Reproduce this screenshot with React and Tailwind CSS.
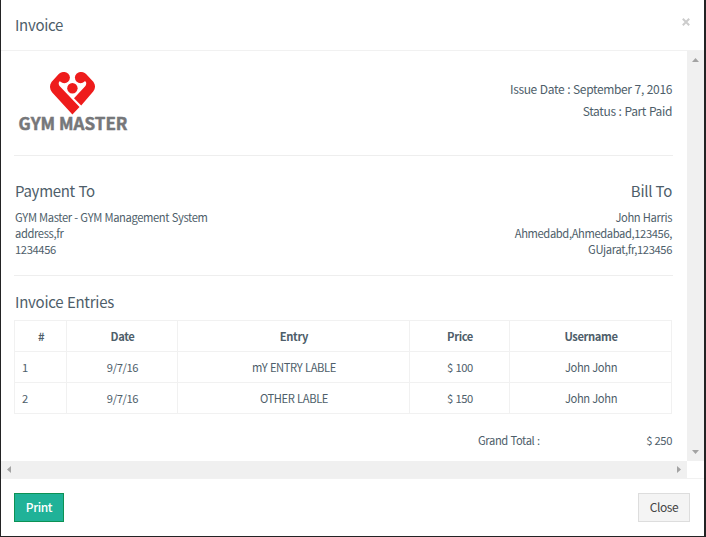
const rows = [
  ["1", "9/7/16", "mY ENTRY LABLE", "$ 100", "John John"],
  ["2", "9/7/16", "OTHER LABLE", "$ 150", "John John"],
];

function Logo() {
  return (
    <svg className="block h-[64px] w-[112px]" viewBox="0 0 112 64">
      <g fill="#ee1c1c">
        <circle cx="46.3" cy="6.600" r="5.600" />
        <circle cx="62.5" cy="6.600" r="5.600" />
        <path d="M46.300 1C43.800 1 42 1.800 40.500 3.300L33.500 11C31.300 14.200 31.500 18 34 21.200L54.400 43.500L61.500 36L41.800 15.300C40 13 40.500 10.300 43 9.500L47.500 10L50 4Z" />
        <path d="M62.500 1C65 1 66.800 1.800 68.300 3.300L75.500 11C77.700 14.200 77.500 17.500 75.200 20.600L63.200 34.500L56 27.300L67.200 15.300C69 13 68.500 10.300 66 9.500L61.500 10L58.500 4Z" />
        <circle cx="54.400" cy="17.200" r="5.200" />
      </g>
      <text x="0.5" y="59" textLength="109" lengthAdjust="spacingAndGlyphs" fill="#76777a" stroke="#76777a" strokeWidth="0.5" className="font-['Noto_Sans_CJK_SC',sans-serif] text-[16.5px] font-bold tracking-normal [word-spacing:0px]">GYM MASTER</text>
    </svg>
  );
}

export default function App() {
  return (
    <div className="h-[537px] w-[706px] overflow-hidden bg-[#232324] pr-0.5 pb-px pl-px font-['Noto_Sans_CJK_SC',sans-serif] text-[11.2px] leading-4 tracking-[-0.38px] text-[#4e5e6a] [word-spacing:0.4px]">
      <div className="flex h-[536px] w-[703px] flex-col bg-white">
        <header className="flex h-[51px] shrink-0 justify-between border-b border-[#f1f1f1] pt-[15px] pr-[14px] pl-[14px]">
          <h4 className="text-[15px] leading-5 tracking-[-0.3px]">Invoice</h4>
          <svg className="mt-[3px] h-[8px] w-[8px]" viewBox="0 0 8 8" stroke="#cccccc" strokeWidth="2"><path d="M.8 .8L7.200 7.200M7.200 .8L.8 7.200" /></svg>
        </header>
        <div className="flex h-[410px] shrink-0">
          <main className="w-[686px] pr-[14px] pl-[13px]">
            <div className="flex h-[105px] justify-between border-b border-[#eeeeee] pt-5 pl-1">
              <Logo />
              <div className="mt-[7px] pr-px text-right text-[12px] leading-[22px] tracking-[-0.36px] [word-spacing:0.6px]">
                <p>Issue Date : September 7, 2016</p>
                <p>Status : Part Paid</p>
              </div>
            </div>
            <div className="flex h-[120px] justify-between border-b border-[#eeeeee] pt-[25px] pl-px">
              <div>
                <h4 className="mb-2 text-[15px] leading-5 tracking-[-0.3px]">Payment To</h4>
                <p>GYM Master - GYM Management System</p>
                <p>address,fr</p>
                <p>1234456</p>
              </div>
              <div className="pr-px text-right">
                <h4 className="mb-2 text-[15px] leading-5 tracking-[-0.3px]">Bill To</h4>
                <p>John Harris</p>
                <p>Ahmedabd,Ahmedabad,123456,</p>
                <p>GUjarat,fr,123456</p>
              </div>
            </div>
            <h4 className="pt-4 pb-2 pl-px text-[15px] leading-5 tracking-[-0.25px]">Invoice Entries</h4>
            <table className="w-[658px] table-fixed border-collapse text-center">
              <colgroup>
                <col className="w-[52px]" />
                <col className="w-[111px]" />
                <col className="w-[232px]" />
                <col className="w-[100px]" />
                <col className="w-[162px]" />
              </colgroup>
              <thead>
                <tr className="h-[31px]">
                  {["#", "Date", "Entry", "Price", "Username"].map((h) => (
                    <th key={h} className="border border-[#f1f1f1] p-0 pl-px font-bold">{h}</th>
                  ))}
                </tr>
              </thead>
              <tbody>
                {rows.map((r) => (
                  <tr key={r[0]} className="h-[31px]">
                    {r.map((c, i) => (
                      <td key={i} className={i === 0 ? "border border-[#f1f1f1] p-0 pl-[7px] text-left" : "border border-[#f1f1f1] p-0 pl-px"}>{c}</td>
                    ))}
                  </tr>
                ))}
              </tbody>
            </table>
            <div className="flex justify-between pt-[18px] pl-[464px]">
              <span>Grand Total :</span>
              <span className="pr-px">$ 250</span>
            </div>
          </main>
          <div className="flex w-[17px] flex-col items-center justify-between bg-[#f0f0f0] pt-[7px] pb-[7px]">
            <svg className="h-1 w-[7px]" viewBox="0 0 7 4" fill="#a3a3a3"><path d="M0 4L3.500 0L7 4Z" /></svg>
            <svg className="h-1 w-[7px]" viewBox="0 0 7 4" fill="#a3a3a3"><path d="M0 0L3.500 4L7 0Z" /></svg>
          </div>
        </div>
        <div className="flex h-[17px] w-[686px] shrink-0 items-center justify-between bg-[#f0f0f0] px-[6px]">
          <svg className="h-[7px] w-1" viewBox="0 0 4 7" fill="#a3a3a3"><path d="M4 0L0 3.500L4 7Z" /></svg>
          <svg className="h-[7px] w-1" viewBox="0 0 4 7" fill="#a3a3a3"><path d="M0 0L4 3.500L0 7Z" /></svg>
        </div>
        <footer className="flex flex-1 items-start justify-between border-t border-[#f1f1f1] pt-[14px] pr-[14px] pl-[13px] text-[12px]">
          <button className="h-[29px] w-[50px] border border-[#0c9254] bg-[#20b298] pb-px font-medium text-white">Print</button>
          <button className="h-[29px] w-[52px] border border-[#dddddd] bg-[#f4f4f4] pb-px text-[#444444]">Close</button>
        </footer>
      </div>
    </div>
  );
}
